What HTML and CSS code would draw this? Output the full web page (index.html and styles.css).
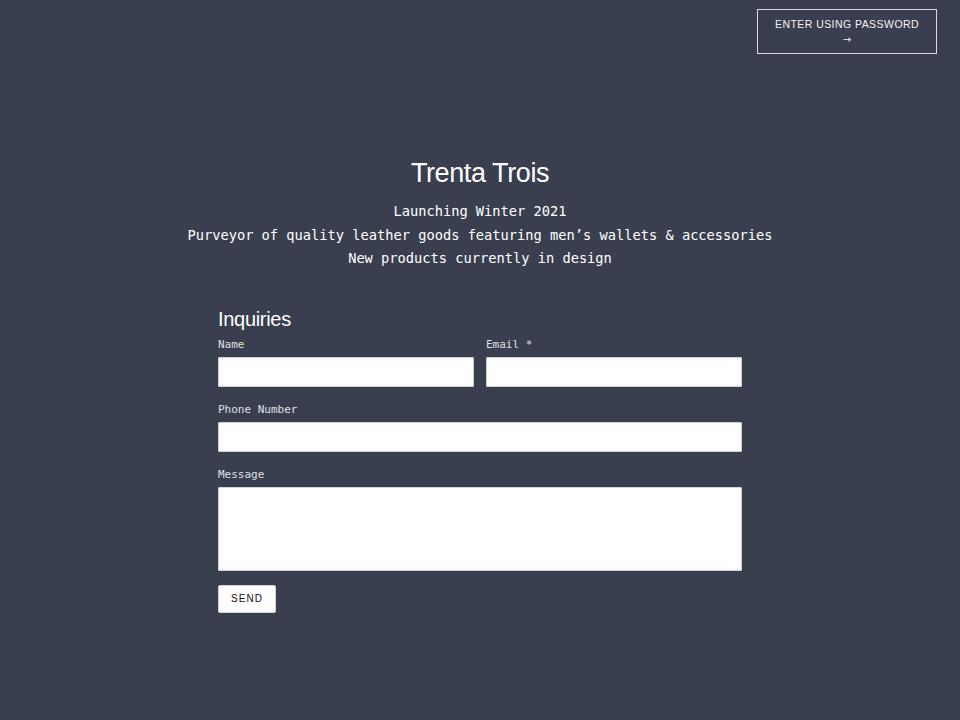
FILE: index.html
```html
<!DOCTYPE html>
<html lang="en">
<head>
    <meta charset="UTF-8">
    <meta name="viewport" content="width=device-width, initial-scale=1.0">
    <title>Trenta Trois</title>
    <link rel="stylesheet" href="styles.css">
</head>
<body>
    <div class="page">
        <!-- Top bar with password entry -->
        <div class="topbar">
            <a href="#" class="password-btn">
                <span>Enter using password</span>
                <span class="arrow">&rarr;</span>
            </a>
        </div>

        <!-- Brand intro -->
        <div class="intro">
            <h1>Trenta Trois</h1>
            <p>Launching Winter 2021</p>
            <p>Purveyor of quality leather goods featuring men’s wallets &amp; accessories</p>
            <p>New products currently in design</p>
        </div>

        <!-- Contact form -->
        <form class="contact">
            <h2>Inquiries</h2>
            <div class="row">
                <div class="field">
                    <label for="name">Name</label>
                    <input type="text" id="name">
                </div>
                <div class="field">
                    <label for="email">Email *</label>
                    <input type="email" id="email">
                </div>
            </div>
            <div class="field">
                <label for="phone">Phone Number</label>
                <input type="tel" id="phone">
            </div>
            <div class="field">
                <label for="message">Message</label>
                <textarea id="message"></textarea>
            </div>
            <button type="button" class="send">Send</button>
        </form>
    </div>
</body>
</html>
```

FILE: styles.css
```css
* {
    margin: 0;
    padding: 0;
    box-sizing: border-box;
}

body {
    background-color: #3a3f4f;
    color: #fff;
    font-family: "Liberation Sans", Arial, sans-serif;
    min-height: 100vh;
}

.page {
    width: 960px;
    height: 720px;
    padding: 9px 23px 0 0;
}

.topbar {
    display: flex;
    justify-content: flex-end;
}

.password-btn {
    width: 180px;
    height: 45px;
    border: 1px solid #d8dae0;
    color: #f2f2f4;
    text-decoration: none;
    display: flex;
    flex-direction: column;
    align-items: center;
    justify-content: center;
    font-size: 10.5px;
    letter-spacing: 0.45px;
    text-transform: uppercase;
    line-height: 15px;
}

.password-btn .arrow {
    font-family: "DejaVu Sans", sans-serif;
    font-size: 10px;
    letter-spacing: 0;
}

.intro {
    text-align: center;
    margin-top: 102px;
    padding-left: 23px;
}

.intro h1 {
    font-weight: normal;
    font-size: 27px;
    letter-spacing: -0.4px;
    line-height: 34px;
    margin-bottom: 10px;
}

.intro p {
    font-family: "DejaVu Sans Mono", monospace;
    font-size: 13.7px;
    line-height: 23.5px;
}

.contact {
    width: 524px;
    margin: 35px 0 0 218px;
}

.contact h2 {
    font-weight: normal;
    font-size: 20px;
    line-height: 26px;
    letter-spacing: -0.3px;
}

.row {
    display: flex;
    gap: 12px;
}

.row .field {
    flex: 1;
}

.field {
    margin-bottom: 10px;
}

.field label {
    display: block;
    font-family: "DejaVu Sans Mono", monospace;
    font-size: 11px;
    line-height: 12px;
    color: #dfe0e5;
    padding-top: 7px;
    margin-bottom: 6px;
}

.field input,
.field textarea {
    display: block;
    width: 100%;
    height: 30px;
    border: 1px solid #cfd1d6;
    border-radius: 1px;
    background: #fff;
    resize: none;
}

.field textarea {
    height: 84px;
}

.send {
    width: 58px;
    height: 28px;
    margin-top: 4px;
    background: #fff;
    border: 1px solid #cfd1d6;
    border-radius: 2px;
    font-family: "Liberation Sans", Arial, sans-serif;
    font-size: 10px;
    letter-spacing: 1px;
    text-transform: uppercase;
    color: #111;
}
```
